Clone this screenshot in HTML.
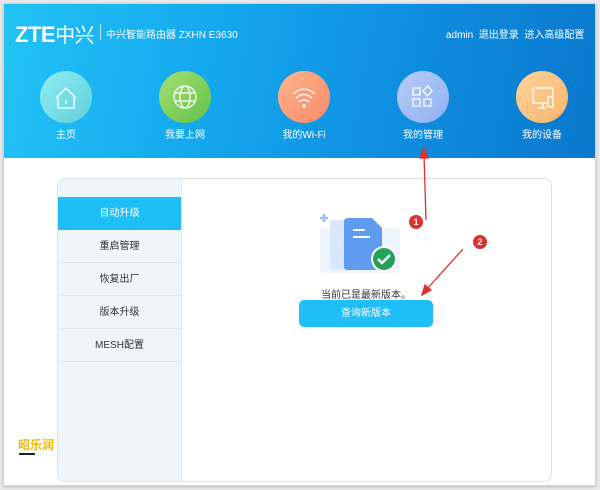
<!DOCTYPE html><html><head><meta charset="utf-8"><style>
*{margin:0;padding:0;box-sizing:border-box}
body{width:600px;height:490px;background:#e9e9e9;font-family:"Liberation Sans","Noto Sans CJK SC",sans-serif;position:relative;overflow:hidden}
.frame{position:absolute;left:3px;top:3px;width:593px;height:483px;background:#fff;border:1px solid #d5d5d5;box-shadow:0 1px 3px rgba(0,0,0,.2)}
.hdr{position:absolute;left:4px;top:4px;width:591px;height:154px;background:linear-gradient(100deg,#22c3f6 0%,#14a8ee 35%,#0f8fe0 65%,#0a78cc 100%)}
.t{position:absolute;color:#fff;white-space:nowrap}
.c{position:absolute;width:52px;height:52px;border-radius:50%;top:71px}
.lbl{position:absolute;top:126px;color:#fff;font-size:10px;width:80px;text-align:center}
.card{position:absolute;left:57px;top:178px;width:495px;height:304px;border:1px solid #dde3e8;border-radius:8px;background:#fff;overflow:hidden}
.side{position:absolute;left:0;top:0;width:124px;height:100%;background:#eef6fb;border-right:1px solid #e1e8ee}
.it{position:absolute;left:0;width:123px;height:33px;line-height:33px;text-align:center;font-size:10px;color:#333;border-bottom:1px solid #e0e6eb}
.act{background:#1ebff8;color:#fff}
.dot{position:absolute;width:14px;height:14px;border-radius:50%;background:#e0302c;color:#fff;font-size:9px;font-weight:bold;text-align:center;line-height:14px}
</style></head><body>
<div class="frame"></div>
<div class="hdr"></div>
<div class="t" style="left:15px;top:19px;font-size:22px;font-weight:bold;letter-spacing:-0.5px">ZTE<span style="font-weight:normal;font-size:20px">中兴</span></div>
<div style="position:absolute;left:100px;top:24px;width:1px;height:16px;background:rgba(255,255,255,.7)"></div>
<div class="t" style="left:106px;top:26px;font-size:10px">中兴智能路由器 ZXHN E3630</div>
<div class="t" style="left:446px;top:26px;font-size:10px">admin&nbsp;&nbsp;退出登录&nbsp;&nbsp;进入高级配置</div>

<div class="c" style="left:40px;background:linear-gradient(135deg,#8eeef0,#5fcfdc)"></div>
<div class="c" style="left:159px;background:linear-gradient(135deg,#a6df72,#62c24a)"></div>
<div class="c" style="left:278px;background:linear-gradient(135deg,#ffb48c,#f78a6a)"></div>
<div class="c" style="left:397px;background:linear-gradient(135deg,#b5cdf8,#8fb0f2)"></div>
<div class="c" style="left:516px;background:linear-gradient(135deg,#ffd39a,#f5b56e)"></div>
<svg style="position:absolute;left:0;top:0" width="600" height="160" fill="none" stroke="#fff" stroke-width="1.3">
<path d="M56 98 L66 88 L76 98 M58 96 V108 H74 V96 M66 100 V104"/>
<circle cx="185" cy="97" r="11"/><ellipse cx="185" cy="97" rx="5" ry="11"/><path d="M174 93 H196 M174 101 H196"/>
<path d="M293 94 Q304 84 315 94 M296 98 Q304 91 312 98 M299 102 Q304 98 309 102"/><circle cx="304" cy="106" r="1" fill="#fff"/>
<rect x="413" y="88" width="7" height="7"/><rect x="413" y="99" width="7" height="7"/><rect x="424" y="99" width="7" height="7"/><path d="M427.5 86 L432 91 L427.5 96 L423 91Z"/>
<path d="M547 103 H533 V88 H553 V96 M543 103 V108 M538 108 H546"/><rect x="548" y="97" width="5" height="10"/>
</svg>
<div class="lbl" style="left:26px">主页</div>
<div class="lbl" style="left:145px">我要上网</div>
<div class="lbl" style="left:264px">我的Wi-Fi</div>
<div class="lbl" style="left:383px">我的管理</div>
<div class="lbl" style="left:502px">我的设备</div>

<div class="card"><div class="side">
<div class="it act" style="top:18px;border:none">自动升级</div>
<div class="it" style="top:51px">重启管理</div>
<div class="it" style="top:84px">恢复出厂</div>
<div class="it" style="top:117px">版本升级</div>
<div class="it" style="top:150px">MESH配置</div>
</div>
<div style="position:absolute;left:118px;top:30px;width:0;height:0;border:6px solid transparent;border-right-color:#fff"></div>
</div>
<svg style="position:absolute;left:310px;top:208px" width="110" height="80">
<rect x="10" y="20" width="80" height="45" rx="4" fill="#eef4fc"/>
<rect x="20" y="12" width="40" height="50" rx="3" fill="#d8e7fb"/>
<path d="M38 10 H62 L72 20 V58 Q72 62 68 62 H38 Q34 62 34 58 V14 Q34 10 38 10Z" fill="#5f9cf0"/>
<path d="M43 22 H55 M43 29 H60" stroke="#fff" stroke-width="2"/>
<path d="M10 10 H18 M14 6 V14" stroke="#9cc2f5" stroke-width="2.5"/>
<circle cx="74" cy="51" r="13" fill="#fff"/><circle cx="74" cy="51" r="11" fill="#23a05a"/>
<path d="M68 51 L72 55 L80 47" stroke="#fff" stroke-width="2.5" fill="none"/>
</svg>
<div class="t" style="left:321px;top:286px;font-size:10px;color:#333">当前已是最新版本。</div>
<div style="position:absolute;left:299px;top:300px;width:134px;height:27px;border-radius:5px;background:#1ebff8;color:#fff;font-size:10px;text-align:center;line-height:27px">查询新版本</div>
<svg style="position:absolute;left:0;top:0" width="600" height="490" stroke="#e0302c" stroke-width="1.3" fill="#e0302c">
<path d="M426 220 L424 155" fill="none"/><path d="M424 148 L420 158 L428 158Z"/>
<path d="M463 249 L426 290" fill="none"/><path d="M422 295 L425 285 L431 290Z"/>
</svg>
<div class="dot" style="left:409px;top:215px">1</div>
<div class="dot" style="left:473px;top:235px">2</div>
<div class="t" style="left:18px;top:436px;font-size:12px;font-weight:bold;color:#f2b800">昭乐润</div>
<div style="position:absolute;left:19px;top:453px;width:16px;height:2px;background:#222"></div>
</body></html>
